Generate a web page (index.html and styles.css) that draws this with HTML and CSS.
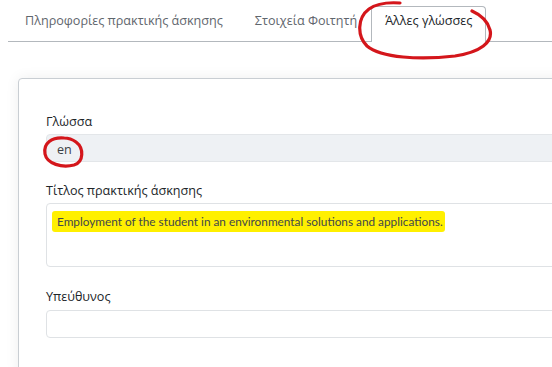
FILE: index.html
```html
<!DOCTYPE html>
<html lang="el">
<head>
<meta charset="UTF-8">
<title>Πρακτική άσκηση</title>
<link rel="stylesheet" href="styles.css">
</head>
<body>
<div class="page">

  <nav class="tabs">
    <a class="tab" href="#">Πληροφορίες πρακτικής άσκησης</a>
    <a class="tab" href="#">Στοιχεία Φοιτητή</a>
    <a class="tab active" href="#">Άλλες γλώσσες</a>
  </nav>

  <div class="card">
    <div class="field">
      <label>Γλώσσα</label>
      <div class="control readonly">en</div>
    </div>
    <div class="field">
      <label>Τίτλος πρακτικής άσκησης</label>
      <div class="control area"><span class="mark">Employment of the student in an environmental solutions and applications.</span></div>
    </div>
    <div class="field last">
      <label>Υπεύθυνος</label>
      <div class="control"></div>
    </div>
  </div>

  <!-- pen marks drawn over the screenshot -->
  <svg class="ink" width="552" height="367" viewBox="0 0 552 367">
    <path d="M400 3 C386 2 376 4 369 9 C357 18 357 36 367 46 C381 58 420 60 455 56 C481 52 493 42 490 30 C488 22 481 15 472 11" />
    <path d="M64 138 C52 137 43 143 45 154 C47 164 62 168 74 165 C84 162 84 148 76 142 C72 139 68 138 64 138" />
  </svg>

</div>
</body>
</html>
```

FILE: styles.css
```css
:root {
  --text: #212529;
  --muted: #5f666d;
  --line: #b3b8bd;
  --field: #dfe2e5;
  --readonly: #eef1f4;
  --ink: #d4161b;
  --marker: #fff000;
}

* { margin: 0; padding: 0; box-sizing: border-box; }

body {
  background: #fff;
  color: var(--text);
  font-family: 'Open Sans', 'Noto Sans', sans-serif;
  font-size: 12.6px;
  overflow: hidden;
}

.page {
  position: relative;
  width: 552px;
  height: 367px;
  padding: 0 0 0 8px;
  overflow: hidden;
}

/* Tabs */
.tabs {
  display: flex;
  padding-top: 6px;
  border-bottom: 1px solid var(--line);
}

.tab {
  display: block;
  padding: 4px 14px 10px 16px;
  color: var(--muted);
  text-decoration: none;
  line-height: 20px;
  border: 1px solid transparent;
  border-bottom: 0;
  border-radius: 4px 4px 0 0;
  margin-bottom: -1px;
}
.tab.active {
  color: var(--text);
  background: #fff;
  border-color: var(--line);
  padding: 4px 13px 11px 13px;
  margin-left: -1px;
}

/* Card */
.card {
  width: 620px;
  margin: 36px 0 0 10px;
  padding: 33px 0 20px 27px;
  border: 1px solid #c9ced3;
  border-radius: 4px;
  box-shadow: 0 0 14px rgba(0,0,0,0.07);
  background: #fff;
  min-height: 300px;
}

.field + .field { margin-top: 19px; }

.field label {
  display: block;
  line-height: 20px;
  margin-bottom: 2px;
}
.field.last { margin-top: 20px; }
.field.last .control { margin-top: 3px; }

.control {
  height: 28px;
  border: 1px solid var(--field);
  border-radius: 4px;
  padding: 4px 10px;
  line-height: 18px;
  color: #3a3f44;
}
.control.readonly {
  background: var(--readonly);
  border-color: #e3e6e9;
  padding-top: 6px;
}
.control.area {
  height: 64px;
  padding: 8px 10px;
  font-family: 'Lato', 'Open Sans', sans-serif;
  font-size: 11.8px;
  line-height: 20px;
  color: #42474c;
}

.mark {
  background: var(--marker);
  padding: 3px 2px 3px 5px;
  margin-left: -5px;
  border-radius: 3px;
}

/* Annotations */
.ink {
  position: absolute;
  left: 0;
  top: 0;
  pointer-events: none;
}
.ink path {
  fill: none;
  stroke: var(--ink);
  stroke-width: 3.2;
  stroke-linecap: round;
}
```
